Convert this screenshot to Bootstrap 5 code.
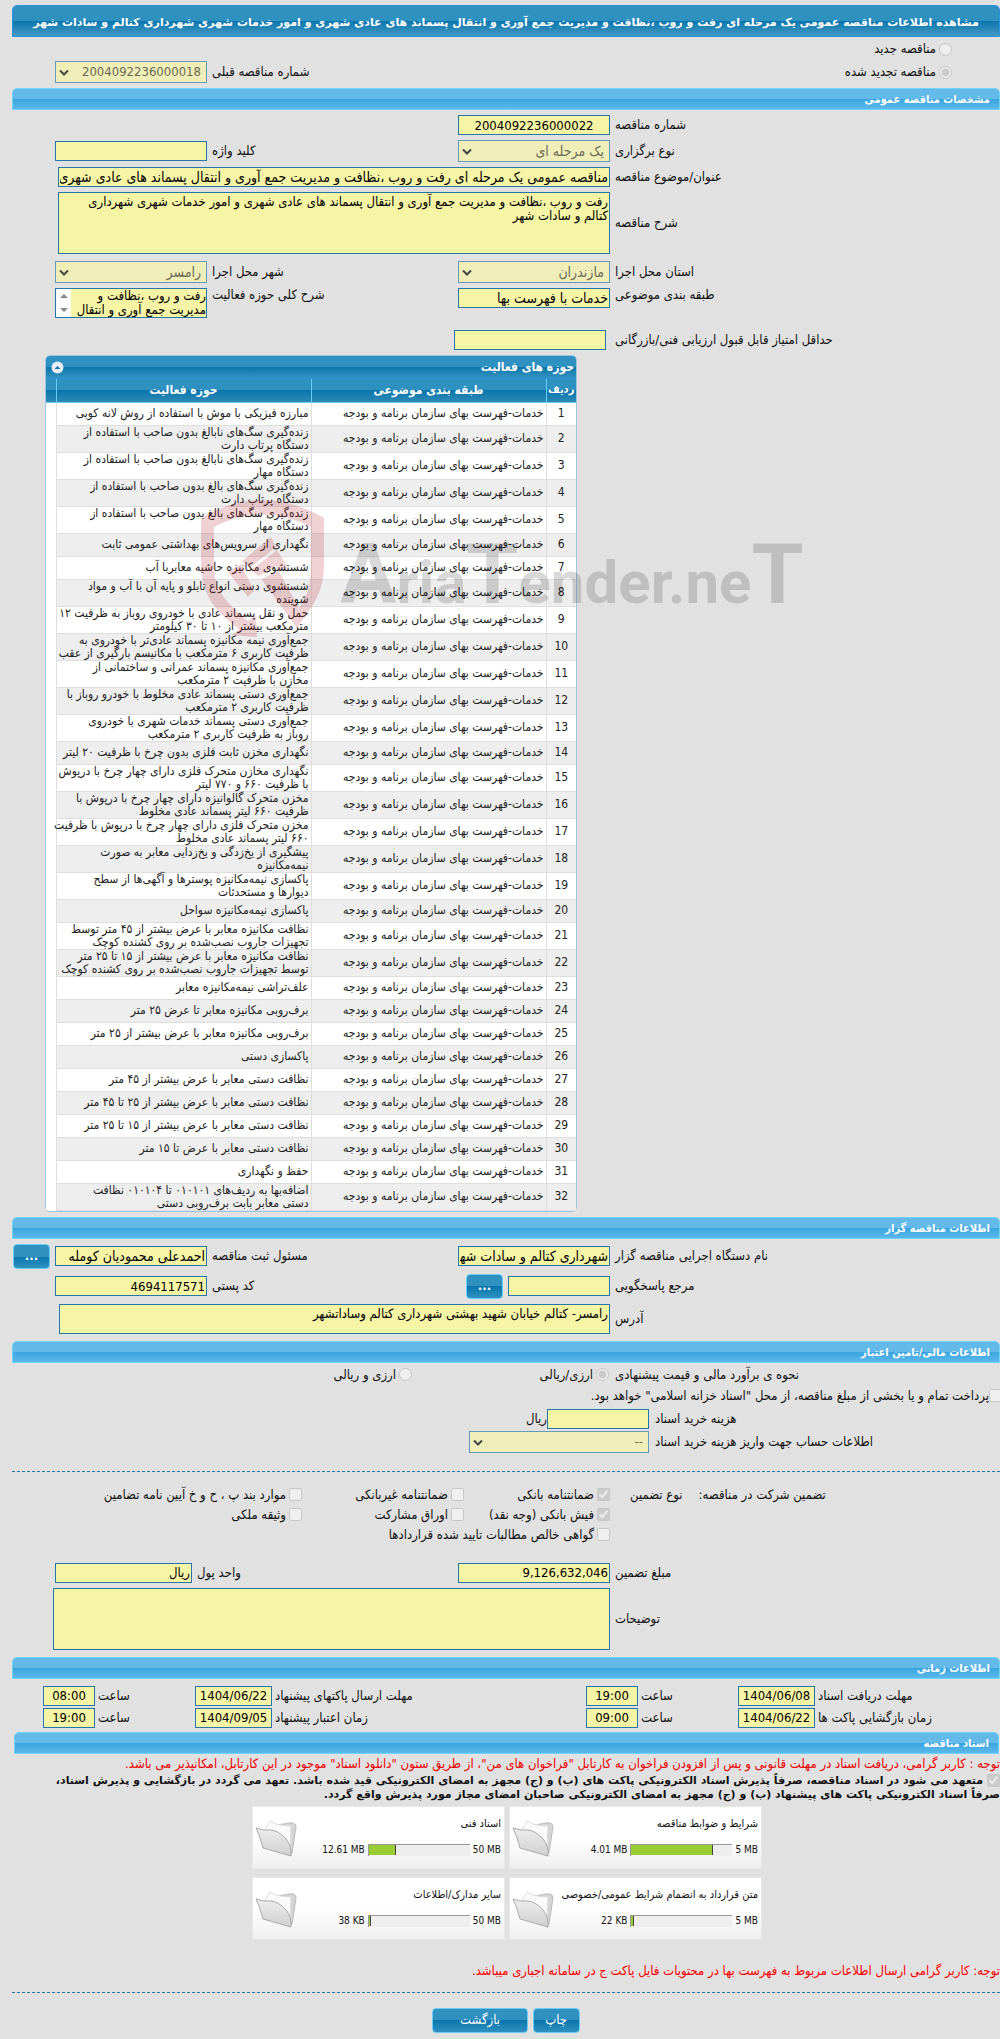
<!DOCTYPE html>
<html lang="fa" dir="rtl">
<head>
<meta charset="utf-8">
<meta name="viewport" content="width=device-width, initial-scale=1">
<title>مشاهده اطلاعات مناقصه عمومی</title>
<link href="https://cdn.jsdelivr.net/npm/bootstrap@5.3.0/dist/css/bootstrap.min.css" rel="stylesheet">
<style>
body{background:#e1e1e1;color:#111;font:13px/14px "DejaVu Sans Condensed","DejaVu Sans",Tahoma,sans-serif;overflow-x:hidden}
main{margin-left:12px;padding:5px 0}
h1,h2,p,hr{margin:0}
label{white-space:nowrap}
.title-bar{height:32px;font-family:"DejaVu Sans",sans-serif;font-size:11px;line-height:34px;font-weight:700;color:#fff;white-space:nowrap;border:1px solid #2a93de;border-radius:5px 5px 0 0;background:linear-gradient(#2f91c0 50%,#0a76ad 50%,#4499c4);display:flex;justify-content:center}
.sec-bar{height:22px;margin-top:7px;padding:0 9px;font-size:11px;line-height:22px;font-weight:700;color:#fff;border:1px solid #70d3fb;border-radius:5px 5px 0 0;background:linear-gradient(#63bae9 50%,#39a5e0 50%,#5cb8ea)}
.form-line{display:grid;grid-template-columns:minmax(0,1fr) 152px 241px 152px 38px;column-gap:5px;align-items:center}
.form-line>label{text-align:left}
.form-stack{display:flex;flex-direction:column;gap:5px;padding-top:5px}
.gap-above-s{margin-top:2px}
.gap-above{margin-top:7px}
.wide{grid-column:2/5}
.fld{display:block;width:100%;height:20px;padding:0 1px;border:1px solid #2677a8;border-radius:0;background:#f6f4a5;color:#000;font-size:13px;line-height:18px}
.fld.fa-text{font-size:14px}
textarea.fld{font-size:13px;line-height:14px;padding:2px 1px;resize:none;overflow:hidden}
.sel{display:block;width:100%;height:22px;padding:0 5px 0 20px;border:1px solid #6499b8;border-radius:0;font-size:13px;line-height:18px;color:#6b6a55;opacity:1;appearance:none;background:#f0eeb8 url("data:image/svg+xml,%3Csvg xmlns='http://www.w3.org/2000/svg' viewBox='0 0 10 8'%3E%3Cpath d='M1 1.5 5 5.5 9 1.5' fill='none' stroke='%23444' stroke-width='2'/%3E%3C/svg%3E") 3px 7px/10px 8px no-repeat}
.sel.fa-text{font-size:14px}
.tall{height:62px}
.mid{height:30px}
.scroll-box{display:flex;border:1px solid #2677a8;height:30px;background:#f6f4a5}
.scroll-box textarea.fld{border:0;height:28px;min-width:0;padding:0}
.scroll-bar{flex:0 0 15px;background:#fcfcfc;display:flex;flex-direction:column;justify-content:space-around;align-items:center}
.opt{display:flex;align-items:center;gap:3px}
.opt input{width:13px;height:13px;margin:0;flex:none}
.btn-sea{display:inline-block;height:25px;padding:0 12px;border:1px solid #68cdf8;border-radius:4px;color:#fff;font-size:13px;line-height:22px;background:linear-gradient(#2f91c0 50%,#0a76ad 50%,#2e91c0)}
.btn-dots{width:37px;font-weight:700;padding:0}
.dash{border:0;border-top:1px dashed #2677a8;opacity:1}
.acts{position:relative;width:532px;margin:5px auto 0 33px;border:1px solid #9fc6e0;border-radius:5px;background:#fff;font-size:12px}
.acts-head{height:23px;padding:0 2px 0 5px;display:flex;justify-content:space-between;align-items:center;color:#fff;font-weight:700;border-radius:4px 4px 0 0;border-bottom:1px solid #2a93de;background:linear-gradient(#2f91c0 50%,#0a76ad 50%,#3492c0)}
.acts-head button{border:0;padding:0;background:none;line-height:0}
.acts table{width:100%;table-layout:fixed;border-collapse:collapse;color:#222}
.acts th{height:23px;padding:0;color:#fff;text-align:center;border-bottom:1px solid #68cdf8;border-left:1px solid #68cdf8;background:linear-gradient(#2f91c0 50%,#0a76ad 50%,#2e88b6)}
.acts th:first-child{font-size:11px}
.acts td{height:23px;padding:0 2px;line-height:13px;white-space:nowrap;border-bottom:1px solid #dedede;border-left:1px solid #dedede}
.acts tr:nth-child(even) td{background:#eee}
.acts th:last-child{border-left:0}
.acts td:last-child{border:0;background:#fff!important}
.acts td:first-child{text-align:center}
.wm{position:absolute;left:154px;top:144px;width:610px;height:140px;pointer-events:none}
.guar{display:grid;grid-template-columns:390px 146px 162px 1fr;row-gap:0;padding-top:13px}
.guar .opt{height:20px}
.guar-head{display:flex;justify-content:flex-end;gap:16px;padding-left:20px;line-height:20px}
.times{display:grid;grid-template-columns:minmax(0,1fr) 77px 94px 52px 308px 77px 94px 52px 28px;column-gap:3px;row-gap:2px;align-items:center;padding-top:7px}
.times label{text-align:left}
.times .fld{text-align:center}
.warn{color:#e00}
.pledge{font-family:"DejaVu Sans",sans-serif;font-size:11px;font-weight:700}
.files{display:grid;grid-template-columns:253px 253px;gap:8px 4px;margin-right:238px;padding-top:4px}
.file-card{height:63px;border:1px solid #e8e8e8;background:linear-gradient(#fff 50%,#efefef);display:flex;font-size:11px;white-space:nowrap}
.file-card>div{flex:1;padding:10px 3px 0 0;text-align:right}
.meter{display:flex;align-items:center;gap:3px;margin-top:12px;font-size:10px;direction:ltr;justify-content:flex-end}
.track{width:102px;height:12px;background:#eee;border-top:1px solid #999;border-left:1px solid #999}
.track i{display:block;height:10px;background:#9c3;border-right:1px solid #444}
</style>
<script src="https://cdn.jsdelivr.net/npm/bootstrap@5.3.0/dist/js/bootstrap.bundle.min.js"></script>
</head>
<body>
<main>
<h1 class="title-bar">مشاهده اطلاعات مناقصه عمومی یک مرحله ای رفت و روب ،نظافت و مدیریت جمع آوری و انتقال پسماند های عادی شهری و امور خدمات شهری شهرداری کتالم و سادات شهر</h1>

<div class="form-line" style="height:24px">
  <span class="opt" style="padding-right:48px"><input type="radio" name="kind" id="k1" disabled><label for="k1">مناقصه جدید</label></span>
</div>
<div class="form-line">
  <span class="opt" style="padding-right:48px"><input type="radio" name="kind" id="k2" checked disabled><label for="k2">مناقصه تجدید شده</label></span>
  <span></span><label for="prev">شماره مناقصه قبلی</label>
  <select class="sel" id="prev" disabled><option>2004092236000018</option></select>
</div>

<h2 class="sec-bar" style="margin-top:5px">مشخصات مناقصه عمومی</h2>
<div class="form-stack">
  <div class="form-line"><label for="num">شماره مناقصه</label><input class="fld text-center" id="num" value="2004092236000022" readonly></div>
  <div class="form-line"><label for="typ">نوع برگزاری</label><select class="sel fa-text" id="typ" disabled><option>یک مرحله ای</option></select><label for="key">کلید واژه</label><input class="fld" id="key"></div>
  <div class="form-line"><label for="sub">عنوان/موضوع مناقصه</label><div class="wide" style="margin-left:3px"><input class="fld fa-text" id="sub" value="مناقصه عمومی یک مرحله ای رفت و روب ،نظافت و مدیریت جمع آوری و انتقال پسماند های عادی شهری و امور خدمات شهری شهرداری کتالم و سادات شهر" readonly></div></div>
  <div class="form-line"><label for="desc">شرح مناقصه</label><div class="wide" style="margin-left:3px"><textarea class="fld tall" id="desc" readonly>رفت و روب ،نظافت و مدیریت جمع آوری و انتقال پسماند های عادی شهری و امور خدمات شهری شهرداری
کتالم و سادات شهر</textarea></div></div>
  <div class="form-line gap-above-s"><label for="prov">استان محل اجرا</label><select class="sel fa-text" id="prov" disabled><option>مازندران</option></select><label for="city">شهر محل اجرا</label><select class="sel fa-text" id="city" disabled><option>رامسر</option></select></div>
  <div class="form-line align-items-start"><label for="cls">طبقه بندی موضوعی</label><input class="fld fa-text" id="cls" value="خدمات با فهرست بها" readonly><label for="area">شرح کلی حوزه فعالیت</label>
    <div class="scroll-box"><textarea class="fld" id="area" readonly>رفت و روب ،نظافت و مدیریت جمع آوری و انتقال</textarea><span class="scroll-bar"><svg width="8" height="4"><path d="M0 4 4 0 8 4z" fill="#888"/></svg><svg width="8" height="4"><path d="M0 0 4 4 8 0z" fill="#888"/></svg></span></div></div>
  <div class="form-line gap-above"><label for="min">حداقل امتیاز قابل قبول ارزیابی فنی/بازرگانی</label><div style="margin:0 4px 0 -4px"><input class="fld" id="min"></div></div>
</div>

<section class="acts">
  <div class="acts-head"><span>حوزه های فعالیت</span><button type="button" aria-label="جمع کردن"><svg width="13" height="13"><circle cx="6.500" cy="6.500" r="6" fill="#e6eefa"/><path d="M3.500 8 6.500 5l3 3z" fill="#1b6ea3"/></svg></button></div>
  <table>
    <colgroup><col style="width:30px"><col style="width:235px"><col style="width:255px"><col></colgroup>
    <thead><tr><th>ردیف</th><th>طبقه بندی موضوعی</th><th>حوزه فعالیت</th><th></th></tr></thead>
    <tbody id="rows"></tbody>
  </table>
  <svg class="wm" viewBox="0 0 610 140" direction="ltr" aria-hidden="true">
    <path fill="#b9202a" fill-opacity=".2" fill-rule="evenodd" d="M1 18Q62-18 124 18V64C124 96 110 108 97 128L59 76 76 66 99 108C108 94 111 84 111 66V27Q62 2 14 27V66C14 90 26 102 48 121L56 115 57 137 32 135 39 129C14 110 1 94 1 62zM28 72 41 64 54 91 48 97zM42 61 71 37 76 47 50 68zM51 70 77 50 87 66 62 79z"/>
    <text x="140" y="103" font-family="Roboto, sans-serif" font-weight="700" font-size="60" fill="#000" fill-opacity=".15"><tspan font-size="84">A</tspan>ria<tspan font-size="84">T</tspan>ender.ne<tspan font-size="84">T</tspan></text>
  </svg>
</section>

<h2 class="sec-bar" style="margin-top:5px">اطلاعات مناقصه گزار</h2>
<div class="form-stack">
  <div class="form-line"><label for="org">نام دستگاه اجرایی مناقصه گزار</label><input class="fld fa-text" id="org" value="شهرداری کتالم و سادات شهر استان مازندران" readonly><label for="reg">مسئول ثبت مناقصه</label><input class="fld fa-text" id="reg" value="احمدعلی محمودیان کومله" readonly><button class="btn-sea btn-dots" type="button">...</button></div>
  <div class="form-line"><label for="ref">مرجع پاسخگویی</label><input class="fld" id="ref" style="width:102px"><span class="d-flex justify-content-between align-items-center" style="margin-right:-50px"><button class="btn-sea btn-dots" type="button">...</button><label for="zip">کد پستی</label></span><input class="fld" id="zip" value="4694117571" readonly></div>
  <div class="form-line"><label for="adr">آدرس</label><div class="wide" style="margin-left:4px"><textarea class="fld mid" id="adr" readonly>رامسر- کتالم خیابان شهید بهشتی شهرداری کتالم وساداتشهر</textarea></div></div>
</div>

<h2 class="sec-bar">اطلاعات مالی/تامین اعتبار</h2>
<div class="d-flex align-items-center" style="height:24px">
  <span style="width:385px;text-align:left">نحوه ی برآورد مالی و قیمت پیشنهادی</span>
  <span class="opt" style="width:203px;padding-right:6px"><input type="radio" name="cur" id="c1" checked disabled><label for="c1">ارزی/ریالی</label></span>
  <span class="opt"><input type="radio" name="cur" id="c2" disabled><label for="c2">ارزی و ریالی</label></span>
</div>
<div class="opt gap-0" style="margin-right:-2px;height:18px"><input type="checkbox" id="tre" disabled><label for="tre">پرداخت تمام و یا بخشی از مبلغ مناقصه، از محل "اسناد خزانه اسلامی" خواهد بود.</label></div>
<div class="d-flex align-items-center" style="gap:6px;padding-top:4px">
  <label for="cost" style="width:345px;text-align:left">هزینه خرید اسناد</label><span class="d-flex align-items-center"><input class="fld" id="cost" style="width:102px">ریال</span>
</div>
<div class="d-flex align-items-center" style="gap:6px;padding-top:2px">
  <label for="acc" style="width:345px;text-align:left">اطلاعات حساب جهت واریز هزینه خرید اسناد</label><select class="sel" id="acc" style="width:180px" disabled><option>--</option></select>
</div>
<hr class="dash" style="margin-top:18px">
<div class="guar">
  <div class="guar-head" style="grid-row:1/4"><span>تضمین شرکت در مناقصه:</span><span>نوع تضمین</span></div>
  <span class="opt"><input type="checkbox" id="g1" checked disabled><label for="g1">ضمانتنامه بانکی</label></span>
  <span class="opt"><input type="checkbox" id="g2" disabled><label for="g2">ضمانتنامه غیربانکی</label></span>
  <span class="opt"><input type="checkbox" id="g3" disabled><label for="g3">موارد بند پ ، ح و خ آیین نامه تضامین</label></span>
  <span class="opt"><input type="checkbox" id="g4" checked disabled><label for="g4">فیش بانکی (وجه نقد)</label></span>
  <span class="opt"><input type="checkbox" id="g5" disabled><label for="g5">اوراق مشارکت</label></span>
  <span class="opt"><input type="checkbox" id="g6" disabled><label for="g6">وثیقه ملکی</label></span>
  <span class="opt"><input type="checkbox" id="g7" disabled><label for="g7">گواهی خالص مطالبات تایید شده قراردادها</label></span>
</div>
<div class="form-stack" style="padding-top:18px">
  <div class="form-line"><label for="amt">مبلغ تضمین</label><input class="fld" id="amt" value="9,126,632,046" readonly><label for="unit" style="margin-left:-15px">واحد پول</label><div style="margin-right:15px"><input class="fld" id="unit" value="ریال" readonly></div></div>
  <div class="form-line"><label for="note">توضیحات</label><div class="wide" style="margin-left:-2px"><textarea class="fld tall" id="note"></textarea></div></div>
</div>

<h2 class="sec-bar">اطلاعات زمانی</h2>
<div class="times">
  <label for="d1">مهلت دریافت اسناد</label><input class="fld" id="d1" value="1404/06/08"><label for="t1">ساعت</label><input class="fld" id="t1" value="19:00">
  <label for="d2">مهلت ارسال پاکتهای پیشنهاد</label><input class="fld" id="d2" value="1404/06/22"><label for="t2">ساعت</label><input class="fld" id="t2" value="08:00"><span></span>
  <label for="d3">زمان بازگشایی پاکت ها</label><input class="fld" id="d3" value="1404/06/22"><label for="t3">ساعت</label><input class="fld" id="t3" value="09:00">
  <label for="d4">زمان اعتبار پیشنهاد</label><input class="fld" id="d4" value="1404/09/05"><label for="t4">ساعت</label><input class="fld" id="t4" value="19:00"><span></span>
</div>

<h2 class="sec-bar" style="margin:4px 1px 0 2px">اسناد مناقصه</h2>
<p class="warn" style="padding:3px 0">توجه : کاربر گرامی، دریافت اسناد در مهلت قانونی و پس از افزودن فراخوان به کارتابل "فراخوان های من"، از طریق ستون "دانلود اسناد" موجود در این کارتابل، امکانپذیر می باشد.</p>
<div class="pledge"><input type="checkbox" id="ok" class="m-0 align-middle" checked disabled> <label for="ok" class="d-inline text-wrap">متعهد می شود در اسناد مناقصه، صرفاً پذیرش اسناد الکترونیکی پاکت های (ب) و (ج) مجهز به امضای الکترونیکی قید شده باشد. تعهد می گردد در بازگشایی و پذیرش اسناد،<br>صرفاً اسناد الکترونیکی پاکت های پیشنهاد (ب) و (ج) مجهز به امضای الکترونیکی صاحبان امضای مجاز مورد پذیرش واقع گردد.</label></div>

<svg width="0" height="0" class="d-block"><defs>
  <linearGradient id="fg" x1="0" y1="0" x2="0" y2="1"><stop offset="0" stop-color="#eee"/><stop offset="1" stop-color="#cfcfcf"/></linearGradient>
  <symbol id="folder" viewBox="0 0 44 40"><path d="M20 6q10-1 14-2 7-1 7 4l-4 26-3 2-14-14z" fill="#d5d5d5" stroke="#bbb"/><path d="M10 10 15 2l6 3q8 2 15 2l-1 24-20-8z" fill="#fafafa" stroke="#dedede"/><path d="M1 9q8 3 15 2 8 1 15 9 6 7 5 17L8 29Q5 17 1 9z" fill="url(#fg)" stroke="#aaa"/></symbol>
</defs></svg>
<div class="files" id="files"></div>
<p class="warn" style="color:#f00;padding-top:24px">توجه: کاربر گرامی ارسال اطلاعات مربوط به فهرست بها در محتویات فایل پاکت ج در سامانه اجباری میباشد.</p>
<hr class="dash" style="margin-top:14px">
<div class="d-flex justify-content-center" style="gap:5px;padding-top:15px"><button class="btn-sea" type="button" style="width:47px">چاپ</button><button class="btn-sea" type="button" style="width:96px">بازگشت</button></div>
</main>
<script>
const acts = [
"مبارزه فیزیکی با موش با استفاده از روش لانه کوبی",
"زنده‌گیری سگ‌های نابالغ بدون صاحب با استفاده از<br>دستگاه پرتاب دارت",
"زنده‌گیری سگ‌های نابالغ بدون صاحب با استفاده از<br>دستگاه مهار",
"زنده‌گیری سگ‌های بالغ بدون صاحب با استفاده از<br>دستگاه پرتاب دارت",
"زنده‌گیری سگ‌های بالغ بدون صاحب با استفاده از<br>دستگاه مهار",
"نگهداری از سرویس‌های بهداشتی عمومی ثابت",
"شستشوی مکانیزه حاشیه معابربا آب",
"شستشوی دستی انواع تابلو و پایه آن با آب و مواد<br>شوینده",
"حمل و نقل پسماند عادی با خودروی روباز به ظرفیت ۱۲<br>مترمکعب بیشتر از ۱۰ تا ۳۰ کیلومتر",
"جمع‌آوری نیمه مکانیزه پسماند عادی‌تر با خودروی به<br>ظرفیت کاربری ۶ مترمکعب با مکانیسم بارگیری از عقب",
"جمع‌آوری مکانیزه پسماند عمرانی و ساختمانی از<br>مخازن با ظرفیت ۲ مترمکعب",
"جمع‌آوری دستی پسماند عادی مخلوط با خودرو روباز با<br>ظرفیت کاربری ۲ مترمکعب",
"جمع‌آوری دستی پسماند خدمات شهری با خودروی<br>روباز به ظرفیت کاربری ۲ مترمکعب",
"نگهداری مخزن ثابت فلزی بدون چرخ با ظرفیت ۲۰ لیتر",
"نگهداری مخازن متحرک فلزی دارای چهار چرخ با درپوش<br>با ظرفیت ۶۶۰ و ۷۷۰ لیتر",
"مخزن متحرک گالوانیزه دارای چهار چرخ با درپوش با<br>ظرفیت ۶۶۰ لیتر پسماند عادی مخلوط",
"مخزن متحرک فلزی دارای چهار چرخ با درپوش با ظرفیت<br>۶۶۰ لیتر پسماند عادی مخلوط",
"پیشگیری از یخ‌زدگی و یخ‌زدایی معابر به صورت<br>نیمه‌مکانیزه",
"پاکسازی نیمه‌مکانیزه پوسترها و آگهی‌ها از سطح<br>دیوارها و مستحدثات",
"پاکسازی نیمه‌مکانیزه سواحل",
"نظافت مکانیزه معابر با عرض بیشتر از ۴۵ متر توسط<br>تجهیزات جاروب نصب‌شده بر روی کشنده کوچک",
"نظافت مکانیزه معابر با عرض بیشتر از ۱۵ تا ۲۵ متر<br>توسط تجهیزات جاروب نصب‌شده بر روی کشنده کوچک",
"علف‌تراشی نیمه‌مکانیزه معابر",
"برف‌روبی مکانیزه معابر تا عرض ۲۵ متر",
"برف‌روبی مکانیزه معابر با عرض بیشتر از ۲۵ متر",
"پاکسازی دستی",
"نظافت دستی معابر با عرض بیشتر از ۴۵ متر",
"نظافت دستی معابر با عرض بیشتر از ۲۵ تا ۴۵ متر",
"نظافت دستی معابر با عرض بیشتر از ۱۵ تا ۲۵ متر",
"نظافت دستی معابر با عرض تا ۱۵ متر",
"حفظ و نگهداری",
"اضافه‌بها به ردیف‌های ۰۱۰۱۰۱ تا ۰۱۰۱۰۴ نظافت<br>دستی معابر بابت برف‌روبی دستی"];
document.getElementById("rows").innerHTML = acts.map((t, i) =>
  `<tr><td>${i + 1}</td><td>خدمات-فهرست بهای سازمان برنامه و بودجه</td><td>${t}</td><td></td></tr>`).join("");
const files = [
  ["شرایط و ضوابط مناقصه", "4.01 MB", "5 MB", 81],
  ["اسناد فنی", "12.61 MB", "50 MB", 27],
  ["متن قرارداد به انضمام شرایط عمومی/خصوصی", "22 KB", "5 MB", 2],
  ["سایر مدارک/اطلاعات", "38 KB", "50 MB", 2]];
document.getElementById("files").innerHTML = files.map(([n, a, b, p]) =>
  `<article class="file-card"><div>${n}<span class="meter"><span>${a}</span><span class="track"><i style="width:${p}%"></i></span><span>${b}</span></span></div><svg width="44" height="40" style="margin:12px 0 0 2px"><use href="#folder"/></svg></article>`).join("");
</script>
</body>
</html>
